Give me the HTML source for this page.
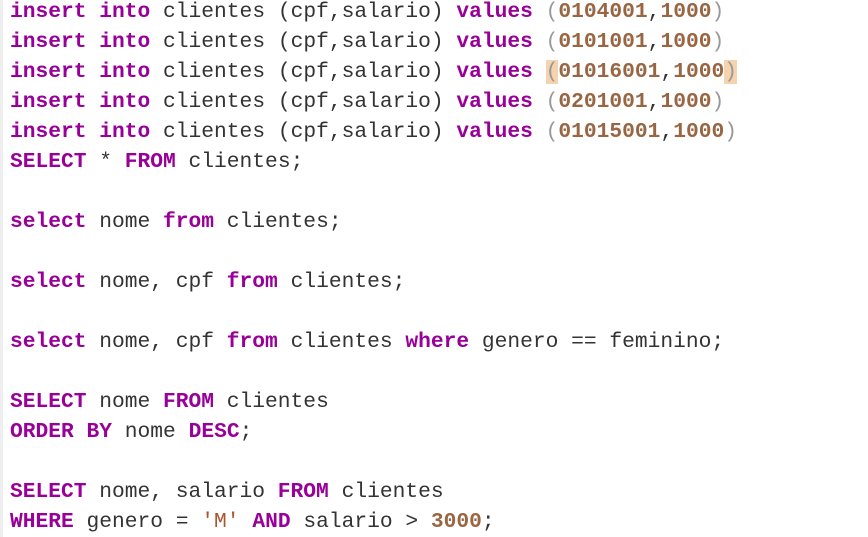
<!DOCTYPE html>
<html><head><style>
html,body{margin:0;padding:0;background:#fff;width:868px;height:537px;overflow:hidden}
.b{position:absolute;left:0;top:0;width:3px;height:537px;background:#eee}
pre{margin:0;position:absolute;left:10px;top:-3px;font-family:"Liberation Mono",monospace;font-size:21.25px;line-height:30px;color:#333}
.k{color:#990099;font-weight:bold}
.n{color:#996644;font-weight:bold}
.p{color:#999}
.s{color:#aa5533}
.h{background:#f5d3ae}
</style></head><body><div class="b"></div>
<pre><span class="k">insert</span> <span class="k">into</span> clientes (cpf,salario) <span class="k">values</span> <span class="p">(</span><span class="n">0104001</span>,<span class="n">1000</span><span class="p">)</span>
<span class="k">insert</span> <span class="k">into</span> clientes (cpf,salario) <span class="k">values</span> <span class="p">(</span><span class="n">0101001</span>,<span class="n">1000</span><span class="p">)</span>
<span class="k">insert</span> <span class="k">into</span> clientes (cpf,salario) <span class="k">values</span> <span class="p h">(</span><span class="n">01016001</span>,<span class="n">1000</span><span class="p h">)</span>
<span class="k">insert</span> <span class="k">into</span> clientes (cpf,salario) <span class="k">values</span> <span class="p">(</span><span class="n">0201001</span>,<span class="n">1000</span><span class="p">)</span>
<span class="k">insert</span> <span class="k">into</span> clientes (cpf,salario) <span class="k">values</span> <span class="p">(</span><span class="n">01015001</span>,<span class="n">1000</span><span class="p">)</span>
<span class="k">SELECT</span> * <span class="k">FROM</span> clientes;

<span class="k">select</span> nome <span class="k">from</span> clientes;

<span class="k">select</span> nome, cpf <span class="k">from</span> clientes;

<span class="k">select</span> nome, cpf <span class="k">from</span> clientes <span class="k">where</span> genero == feminino;

<span class="k">SELECT</span> nome <span class="k">FROM</span> clientes
<span class="k">ORDER</span> <span class="k">BY</span> nome <span class="k">DESC</span>;

<span class="k">SELECT</span> nome, salario <span class="k">FROM</span> clientes
<span class="k">WHERE</span> genero = <span class="s">'M'</span> <span class="k">AND</span> salario &gt; <span class="n">3000</span>;</pre>
</body></html>
